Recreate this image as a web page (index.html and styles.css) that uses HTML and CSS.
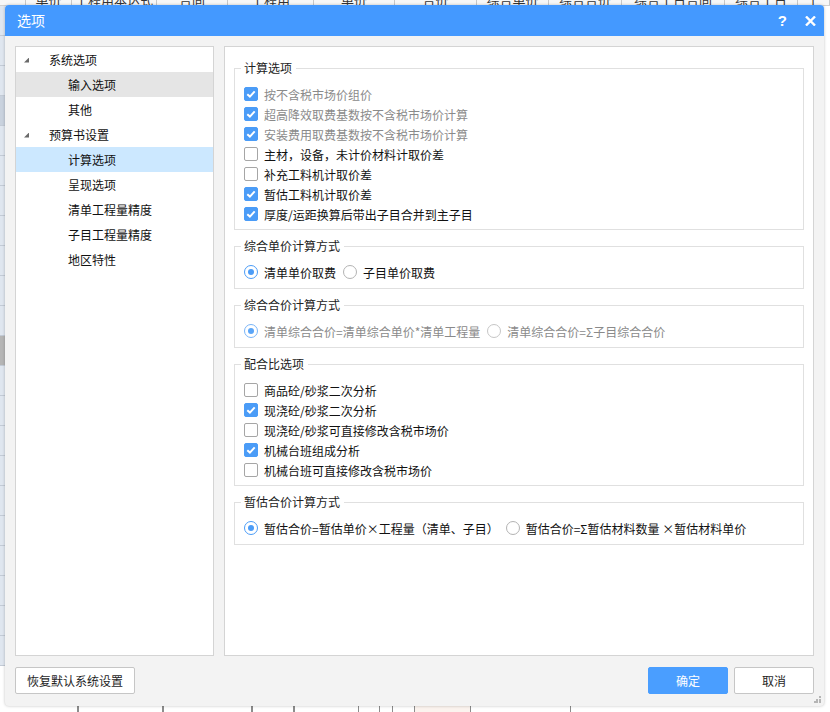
FILE: index.html
```html
<!DOCTYPE html>
<html lang="zh">
<head>
<meta charset="utf-8">
<title>选项</title>
<link rel="stylesheet" href="styles.css">
</head>
<body>
<div class="backdrop">
  <div class="sheet-head">
    <span class="hc" style="width:26px"></span>
    <span class="hc" style="width:46px">单价</span>
    <span class="hc" style="width:85px">工程用本达式</span>
    <span class="hc" style="width:71px">合同</span>
    <span class="hc" style="width:86px">工程用</span>
    <span class="hc" style="width:81px">单价</span>
    <span class="hc" style="width:82px">合价</span>
    <span class="hc" style="width:72px">综合单价</span>
    <span class="hc" style="width:73px">综合合价</span>
    <span class="hc" style="width:103px">综合工日合同</span>
    <span class="hc" style="width:73px">综合工日</span>
    <span class="hc" style="width:32px">上</span>
  </div>
  <div class="sheet-mid">
    <div class="sheet-side">
      <div class="sc"></div><div class="sc"></div><div class="sc"></div><div class="sc alt"></div><div class="sc"></div><div class="sc"></div><div class="sc"></div><div class="sc"></div><div class="sc"></div><div class="sc"></div><div class="sc"></div><div class="sc dark"></div><div class="sc"></div><div class="sc"></div><div class="sc"></div><div class="sc"></div><div class="sc"></div><div class="sc"></div><div class="sc"></div><div class="sc"></div><div class="sc"></div><div class="sc"></div>
    </div>
  </div>
  <div class="sheet-foot">
    <span class="fc" style="width:78px"></span>
    <span class="fc dbl" style="width:85px"></span>
    <span class="fc dbl" style="width:89px"></span>
    <span class="fc dbl" style="width:42px"></span>
    <span class="fc dbl" style="width:65px"></span>
    <span class="fc" style="width:21px"></span>
    <span class="fc" style="width:13px"></span>
    <span class="fc" style="width:22px"></span>
    <span class="fc tint" style="width:56px"></span>
    <span class="fc" style="width:100px"></span>
  </div>
</div>

<div class="dialog">
  <div class="titlebar">
    <span class="title">选项</span>
    <div class="tools">
      <span class="help">?</span>
      <svg class="close" width="11" height="10" viewBox="0 0 11 10"><path d="M1 0.5 L10 9.5 M10 0.5 L1 9.5" stroke="#fff" stroke-width="2.4" fill="none"/></svg>
    </div>
  </div>

  <div class="body">
    <div class="tree">
      <div class="node lvl0"><span class="tri"></span>系统选项</div>
      <div class="node lvl1 hover">输入选项</div>
      <div class="node lvl1">其他</div>
      <div class="node lvl0"><span class="tri"></span>预算书设置</div>
      <div class="node lvl1 selected">计算选项</div>
      <div class="node lvl1">呈现选项</div>
      <div class="node lvl1">清单工程量精度</div>
      <div class="node lvl1">子目工程量精度</div>
      <div class="node lvl1">地区特性</div>
    </div>

    <div class="content">
      <fieldset class="group">
        <legend>计算选项</legend>
        <div class="row disabled"><span class="cb on"></span>按不含税市场价组价</div>
        <div class="row disabled"><span class="cb on"></span>超高降效取费基数按不含税市场价计算</div>
        <div class="row disabled"><span class="cb on"></span>安装费用取费基数按不含税市场价计算</div>
        <div class="row"><span class="cb"></span>主材，设备，未计价材料计取价差</div>
        <div class="row"><span class="cb"></span>补充工料机计取价差</div>
        <div class="row"><span class="cb on"></span>暂估工料机计取价差</div>
        <div class="row"><span class="cb on"></span>厚度/运距换算后带出子目合并到主子目</div>
      </fieldset>

      <fieldset class="group radios">
        <legend>综合单价计算方式</legend>
        <div class="row">
          <span class="opt"><span class="rb on"></span>清单单价取费</span>
          <span class="opt"><span class="rb"></span>子目单价取费</span>
        </div>
      </fieldset>

      <fieldset class="group radios">
        <legend>综合合价计算方式</legend>
        <div class="row disabled">
          <span class="opt"><span class="rb on"></span>清单综合合价=清单综合单价*清单工程量</span>
          <span class="opt"><span class="rb"></span>清单综合合价=Σ子目综合合价</span>
        </div>
      </fieldset>

      <fieldset class="group">
        <legend>配合比选项</legend>
        <div class="row"><span class="cb"></span>商品砼/砂浆二次分析</div>
        <div class="row"><span class="cb on"></span>现浇砼/砂浆二次分析</div>
        <div class="row"><span class="cb"></span>现浇砼/砂浆可直接修改含税市场价</div>
        <div class="row"><span class="cb on"></span>机械台班组成分析</div>
        <div class="row"><span class="cb"></span>机械台班可直接修改含税市场价</div>
      </fieldset>

      <fieldset class="group radios">
        <legend>暂估合价计算方式</legend>
        <div class="row">
          <span class="opt"><span class="rb on"></span>暂估合价=暂估单价×工程量（清单、子目）</span>
          <span class="opt"><span class="rb"></span>暂估合价=Σ暂估材料数量 ×暂估材料单价</span>
        </div>
      </fieldset>
    </div>
  </div>

  <div class="footer">
    <button class="btn">恢复默认系统设置</button>
    <div class="actions">
      <button class="btn primary">确定</button>
      <button class="btn">取消</button>
    </div>
  </div>
  <svg class="grip" width="7" height="7" viewBox="0 0 7 7"><rect x="5" y="0" width="2" height="2" fill="#b5b5b5"/><rect x="2" y="3" width="2" height="2" fill="#b5b5b5"/><rect x="5" y="3" width="2" height="2" fill="#b5b5b5"/><rect x="0" y="5" width="2" height="2" fill="#b5b5b5"/><rect x="2" y="5" width="2" height="2" fill="#b5b5b5"/><rect x="5" y="5" width="2" height="2" fill="#b5b5b5"/></svg>
</div>
</body>
</html>
```

FILE: styles.css
```css
* { box-sizing: border-box; }

html, body {
  margin: 0;
  padding: 0;
}

body {
  width: 830px;
  height: 712px;
  overflow: hidden;
  position: relative;
  background: #ffffff;
  font-family: "Noto Sans CJK SC", "Microsoft YaHei", sans-serif;
  font-size: 12px;
  color: #1e1e1e;
}

/* ---------- spreadsheet behind the dialog ---------- */
.backdrop {
  width: 830px;
  height: 712px;
  background: #ffffff;
  display: flex;
  flex-direction: column;
}

.sheet-head {
  flex: none;
  display: flex;
  height: 6px;
  overflow: hidden;
  background: #f7f7f7;
  border-bottom: 1px solid #d0d0d0;
}

.hc {
  flex: none;
  height: 20px;
  margin-top: -10px;
  line-height: 20px;
  text-align: center;
  font-size: 13px;
  color: #333;
  border-right: 1px solid #c8c8c8;
  white-space: nowrap;
  overflow: hidden;
}

.sheet-mid {
  flex: 1;
  overflow: hidden;
}

.sheet-side {
  width: 5px;
  display: flex;
  flex-direction: column;
}

.sc {
  flex: none;
  height: 30px;
  background: #dfe6ef;
  border-bottom: 1px solid #c3cbd6;
}
.sc.alt { background: #c9d2de; }
.sc.dark { background: #b5b5b5; }

.sheet-foot {
  flex: none;
  height: 6px;
  display: flex;
}

.fc {
  flex: none;
  height: 100%;
  border-right: 1px solid #8c8c8c;
}

.fc.dbl {
  border-left: 1px solid #8c8c8c;
}

.fc.tint { background: #fbf3ee; }

/* ---------- dialog ---------- */
.dialog {
  position: absolute;
  left: 5px;
  top: 5px;
  width: 819px;
  height: 701px;
  background: #f3f3f3;
  border-radius: 4px;
  box-shadow: 0 0 3px rgba(0, 0, 0, 0.25);
  overflow: hidden;
}

.titlebar {
  height: 31px;
  background: #4499ff;
  display: flex;
  align-items: center;
  justify-content: space-between;
  padding: 0 8px 0 12px;
  color: #fff;
}

.title {
  font-size: 14px;
  line-height: 31px;
  margin-top: -1px;
}

.tools {
  display: flex;
  align-items: center;
  gap: 18px;
}

.help {
  font-family: "Liberation Sans", Arial, sans-serif;
  font-weight: bold;
  font-size: 15px;
  line-height: 15px;
}

.close { display: block; }

.body {
  display: flex;
  gap: 10px;
  padding: 10px 10px 0;
  height: 620px;
}

.tree {
  flex: none;
  width: 199px;
  height: 610px;
  background: #fff;
  border: 1px solid #d4d4d4;
}

.node {
  height: 25px;
  line-height: 25px;
  white-space: nowrap;
  color: #111;
  display: flex;
  align-items: center;
}

.lvl0 { padding-left: 8px; }
.lvl1 { padding-left: 52px; }

.tri {
  width: 5px;
  height: 5px;
  margin-right: 20px;
  margin-top: 1px;
  background: #6a6a6a;
  clip-path: polygon(100% 0, 100% 100%, 0 100%);
}

.node.hover { background: #e5e5e5; }
.node.selected { background: #cce8ff; }

.content {
  flex: 1;
  height: 610px;
  background: #fff;
  border: 1px solid #d4d4d4;
  padding: 13px 9px 0;
}

.group {
  margin: 0 0 8px;
  border: 1px solid #e0e0e0;
  padding: 8px 10px 5px 9px;
  min-width: 0;
}

.group.radios { padding-bottom: 6px; }

.group legend {
  padding: 0 4px 0 3px;
  margin-left: -3px;
  line-height: 16px;
  color: #222;
}

.row {
  display: flex;
  align-items: center;
  gap: 6px;
  height: 20px;
  white-space: nowrap;
  color: #111;
}

.row.disabled { color: #8a8a8a; }

.opt {
  display: inline-flex;
  align-items: center;
  gap: 6px;
  margin-right: 1px;
}

.cb {
  flex: none;
  width: 14px;
  height: 14px;
  border: 1px solid #a6a6a6;
  border-radius: 2px;
  background: #fff;
}

.cb.on {
  border-color: #4b9cf7;
  background: #4b9cf7 url("data:image/svg+xml;utf8,<svg xmlns='http://www.w3.org/2000/svg' width='12' height='12' viewBox='0 0 12 12'><path d='M2.3 6.2 L4.9 8.6 L9.7 3.4' stroke='white' stroke-width='2' fill='none'/></svg>") center / 12px 12px no-repeat;
}

.rb {
  flex: none;
  width: 14px;
  height: 14px;
  border: 1px solid #b3b3b3;
  border-radius: 50%;
  background: #fff;
  position: relative;
}

.rb.on { border-color: #4b9cf7; }

.rb.on::after {
  content: "";
  position: absolute;
  left: 3px;
  top: 3px;
  width: 6px;
  height: 6px;
  border-radius: 50%;
  background: #4b9cf7;
}

.disabled .rb.on { border-color: #7ab5f8; }
.disabled .rb.on::after { background: #5aa5f8; }
.disabled .rb { border-color: #c6c6c6; }

/* ---------- footer ---------- */
.footer {
  display: flex;
  justify-content: space-between;
  align-items: center;
  padding: 0 10px;
  margin-top: 11px;
}

.actions {
  display: flex;
  gap: 6px;
}

.btn {
  height: 27px;
  min-width: 80px;
  padding: 0 11px;
  border: 1px solid #c6c6c6;
  border-radius: 2px;
  background: #fff;
  font-family: inherit;
  font-size: 12px;
  color: #1e1e1e;
}

.btn.primary {
  background: #4a9eff;
  border-color: #4a9eff;
  color: #fff;
}

.grip {
  position: absolute;
  right: 3px;
  bottom: 3px;
}
```
